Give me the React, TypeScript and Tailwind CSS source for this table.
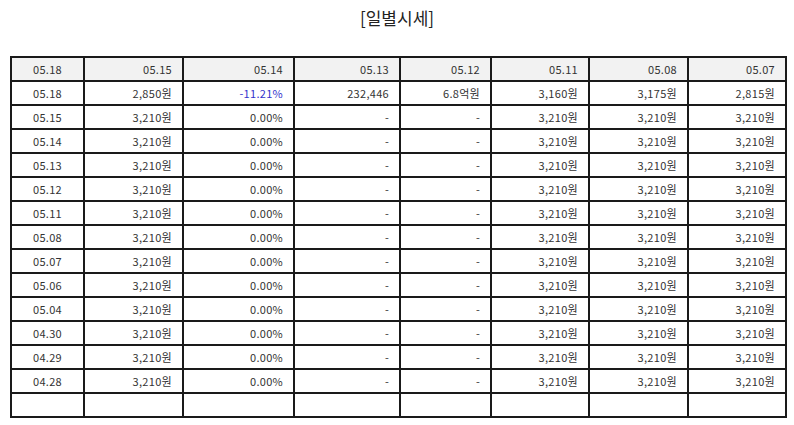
import React from 'react';

const headers = ['05.18', '05.15', '05.14', '05.13', '05.12', '05.11', '05.08', '05.07'];
const widths = ['w-[73px]', 'w-[99px]', 'w-[111px]', 'w-[106px]', 'w-[91px]', 'w-[98px]', 'w-[99px]', 'w-[98px]'];

const dates = ['05.15', '05.14', '05.13', '05.12', '05.11', '05.08', '05.07', '05.06', '05.04', '04.30', '04.29', '04.28'];

const rows: string[][] = [
    ['05.18', '2,850원', '-11.21%', '232,446', '6.8억원', '3,160원', '3,175원', '2,815원'],
    ...dates.map(d => [d, '3,210원', '0.00%', '-', '-', '3,210원', '3,210원', '3,210원']),
    ['', '', '', '', '', '', '', ''],
];

const App: React.FC = () => {
    return (
        <div className="w-[794px] h-[425px] bg-white text-[#333] font-['Noto_Sans_CJK_KR','Noto_Sans',sans-serif]">
            <h1 className="pt-[5px] h-[56px] text-center text-[17px] text-[#222] font-normal">[일별시세]</h1>
            <table className="ml-[10px] w-[775px] table-fixed border-collapse text-[11px] tracking-[0.3px]">
                <colgroup>
                    {widths.map((w, i) => <col key={i} className={w} />)}
                </colgroup>
                <thead>
                    <tr className="bg-[#f2f2f2]">
                        {headers.map((h, i) => (
                            <th
                                key={i}
                                className={`h-[24px] border-2 border-[#1a1a1a] font-normal ${i === 0 ? 'text-center' : 'text-right pr-[10px]'}`}
                            >
                                {h}
                            </th>
                        ))}
                    </tr>
                </thead>
                <tbody>
                    {rows.map((r, ri) => (
                        <tr key={ri}>
                            {r.map((c, ci) => (
                                <td
                                    key={ci}
                                    className={`h-[24px] border-2 border-[#1a1a1a] ${ci === 0 ? 'text-center' : 'text-right pr-[10px]'} ${c.startsWith('-1') ? 'text-[#3333cc]' : ''}`}
                                >
                                    {c}
                                </td>
                            ))}
                        </tr>
                    ))}
                </tbody>
            </table>
        </div>
    );
};

export default App;
